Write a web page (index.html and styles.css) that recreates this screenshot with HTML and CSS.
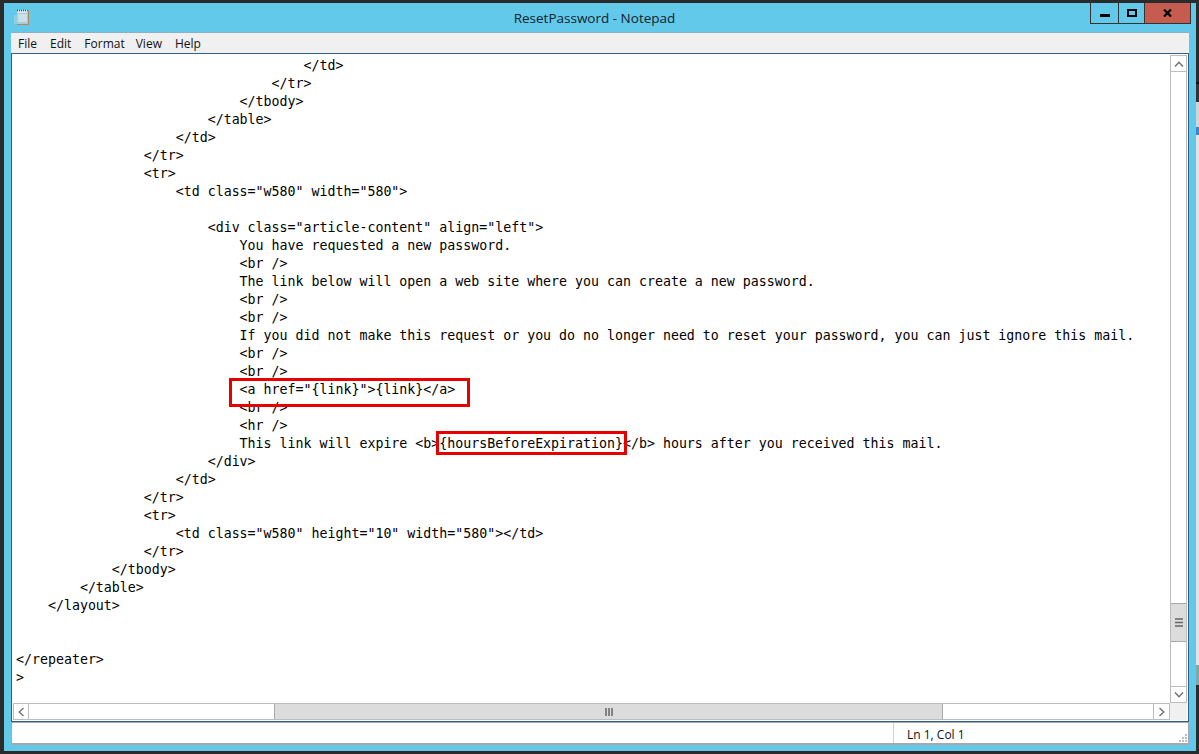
FILE: index.html
```html
<!DOCTYPE html>
<html lang="en">
<head>
<meta charset="utf-8">
<title>ResetPassword - Notepad</title>
<link rel="stylesheet" href="styles.css">
</head>
<body>
<div class="desktop">
  <div class="window">
    <div class="titlebar">
      <svg class="app-icon" width="16" height="16" viewBox="0 0 16 16">
        <rect x="3" y="1" width="12" height="15" fill="#b08a5e"/>
        <rect x="0" y="6" width="3" height="9" fill="#8fd0e0"/>
        <rect x="3" y="1" width="10.5" height="14" fill="#d6e8ee"/>
        <rect x="3" y="4" width="10.5" height="11" fill="#a9cdd8"/>
        <path d="M4 6h9M4 8h9M4 10h9M4 12h9" stroke="#e8f3f6" stroke-width="1"/>
        <path d="M3 1.500h10.500" stroke="#3c4a55" stroke-width="1.400" stroke-dasharray="1 1"/>
      </svg>
      <div class="title">ResetPassword - Notepad</div>
      <div class="controls">
        <div class="ctl ctl-min"><svg width="10" height="3" viewBox="0 0 10 3"><rect width="10" height="3" fill="#000"/></svg></div>
        <div class="ctl ctl-max"><svg width="10" height="8" viewBox="0 0 10 8"><path d="M1 1h8v6H1z" fill="none" stroke="#000" stroke-width="2"/></svg></div>
        <div class="ctl ctl-close"><svg width="9" height="8" viewBox="0 0 9 8"><path d="M1 .5 8 7.500M8 .5 1 7.500" fill="none" stroke="#000" stroke-width="2.200"/></svg></div>
      </div>
    </div>
    <div class="client">
      <div class="menu">
        <span class="menu-item">File</span>
        <span class="menu-item">Edit</span>
        <span class="menu-item menu-item-format">Format</span>
        <span class="menu-item">View</span>
        <span class="menu-item">Help</span>
      </div>
      <div class="editor">
        <div class="text-area">
<pre class="code">                                    &lt;/td&gt;
                                &lt;/tr&gt;
                            &lt;/tbody&gt;
                        &lt;/table&gt;
                    &lt;/td&gt;
                &lt;/tr&gt;
                &lt;tr&gt;
                    &lt;td class="w580" width="580"&gt;

                        &lt;div class="article-content" align="left"&gt;
                            You have requested a new password.
                            &lt;br /&gt;
                            The link below will open a web site where you can create a new password.
                            &lt;br /&gt;
                            &lt;br /&gt;
                            If you did not make this request or you do no longer need to reset your password, you can just ignore this mail.
                            &lt;br /&gt;
                            &lt;br /&gt;
                            &lt;a href="{link}"&gt;{link}&lt;/a&gt;
                            &lt;br /&gt;
                            &lt;hr /&gt;
                            This link will expire &lt;b&gt;{hoursBeforeExpiration}&lt;/b&gt; hours after you received this mail.
                        &lt;/div&gt;
                    &lt;/td&gt;
                &lt;/tr&gt;
                &lt;tr&gt;
                    &lt;td class="w580" height="10" width="580"&gt;&lt;/td&gt;
                &lt;/tr&gt;
            &lt;/tbody&gt;
        &lt;/table&gt;
    &lt;/layout&gt;


&lt;/repeater&gt;
&gt;</pre>
          <div class="mark mark-link"></div>
          <div class="mark mark-hours"></div>
        </div>
        <div class="vscroll">
          <div class="sb-btn sb-btn-up"><svg width="10" height="6" viewBox="0 0 10 6"><path d="M1 5.500 5 1.200 9 5.500" fill="none" stroke="#6e6e6e" stroke-width="1.300"/></svg></div>
          <div class="sb-fill"></div>
          <div class="vthumb"><svg width="8" height="9" viewBox="0 0 8 9"><path d="M0 1h8M0 4.500h8M0 8h8" stroke="#666" stroke-width="1.500"/></svg></div>
          <div class="vscroll-rest"></div>
          <div class="sb-btn sb-btn-down"><svg width="10" height="6" viewBox="0 0 10 6"><path d="M1 .5 5 4.800 9 .5" fill="none" stroke="#6e6e6e" stroke-width="1.300"/></svg></div>
        </div>
        <div class="hscroll">
          <div class="sb-btn sb-btn-left"><svg width="6" height="10" viewBox="0 0 6 10"><path d="M5.500 1 1.200 5 5.500 9" fill="none" stroke="#6e6e6e" stroke-width="1.300"/></svg></div>
          <div class="hscroll-lead"></div>
          <div class="hthumb"><svg width="8" height="8" viewBox="0 0 8 8"><path d="M1 0v8M4 0v8M7 0v8" stroke="#666" stroke-width="1.500"/></svg></div>
          <div class="sb-fill"></div>
          <div class="sb-btn sb-btn-right"><svg width="6" height="10" viewBox="0 0 6 10"><path d="M.5 1 4.800 5 .5 9" fill="none" stroke="#6e6e6e" stroke-width="1.300"/></svg></div>
        </div>
        <div class="corner"></div>
      </div>
      <div class="status">
        <div class="status-main"></div>
        <div class="status-pos">Ln 1, Col 1</div>
        <svg class="grip" width="10" height="10" viewBox="0 0 10 10"><path d="M7 1h2v2H7zM4 4h2v2H4zM7 4h2v2H7zM1 7h2v2H1zM4 7h2v2H4zM7 7h2v2H7z" fill="#bdbdbd"/></svg>
      </div>
    </div>
  </div>
  <div class="behind">
    <div class="behind-a"></div>
    <div class="behind-b"></div>
    <div class="behind-c"></div>
    <div class="behind-d"></div>
    <div class="behind-e"></div>
    <div class="behind-f"></div>
    <div class="behind-g"></div>
  </div>
</div>
</body>
</html>
```

FILE: styles.css
```css
html, body {
  margin: 0;
  padding: 0;
  height: 100%;
  overflow: hidden;
  background: #2b2b2b;
}

.desktop {
  display: flex;
  height: 754px;
  width: 1199px;
  padding-left: 4px;
  box-sizing: border-box;
}

.window {
  width: 1192px;
  height: 748px;
  margin-top: 3px;
  background: #63c9ea;
  display: flex;
  flex-direction: column;
  flex: none;
}

.titlebar {
  height: 29px;
  display: flex;
  align-items: flex-start;
  flex: none;
  padding-left: 10px;
}

.app-icon {
  margin-top: 6px;
  flex: none;
}

.title {
  flex: 1;
  padding-left: 69px;
  margin-top: 5px;
  text-align: center;
  font: 13.5px/20px "Open Sans", "Noto Sans", sans-serif;
  color: #10222c;
}

.controls {
  display: flex;
  height: 21px;
  border: solid #333;
  border-width: 0 1px 1px 1px;
  box-sizing: border-box;
  margin-right: 5px;
  flex: none;
}

.ctl {
  display: flex;
  align-items: center;
  justify-content: center;
  box-sizing: border-box;
}

.ctl-min {
  width: 28px;
  border-right: 1px solid #333;
  padding-top: 5px;
}

.ctl-max {
  width: 26px;
  border-right: 1px solid #333;
}

.ctl-close {
  width: 45px;
  background: #c65b50;
}

.client {
  margin: 0 7px;
  height: 713px;
  display: flex;
  flex-direction: column;
  flex: none;
}

.menu {
  height: 21px;
  box-sizing: border-box;
  flex: none;
  background: #f0f0f0;
  border-top: 1px solid #8fb0c4;
  display: flex;
  align-items: center;
  padding: 1px 0 0 7px;
  font: 12px/18px "Open Sans", "Noto Sans", sans-serif;
  color: #111;
}

.menu-item {
  margin-right: 13px;
}

.menu-item-format {
  margin-right: 11px;
}

.editor {
  height: 669px;
  box-sizing: border-box;
  flex: none;
  border: 1px solid #2c628b;
  background: #fff;
  padding: 1px 0 1px 1px;
  display: grid;
  grid-template-columns: 1157px 17px;
  grid-template-rows: 648px 17px;
}

.text-area {
  position: relative;
  overflow: hidden;
  padding: 2px 0 0 3px;
}

.code {
  margin: 0;
  font: 13.28px/18px "DejaVu Sans Mono", monospace;
  color: #000;
  white-space: pre;
}

.mark {
  position: absolute;
  border: 3px solid #e60000;
  box-sizing: border-box;
}

.mark-link {
  left: 216px;
  top: 323px;
  width: 241px;
  height: 29px;
}

.mark-hours {
  left: 423px;
  top: 376px;
  width: 191px;
  height: 24px;
}

.vscroll {
  display: flex;
  flex-direction: column;
  border: solid #bcbcbc;
  border-width: 0 1px 0 1px;
  box-sizing: border-box;
  height: 648px;
}

.hscroll {
  display: flex;
  height: 17px;
  box-sizing: border-box;
  border: solid #bcbcbc;
  border-width: 1px 0 1px 0;
}

.sb-btn {
  flex: none;
  display: flex;
  align-items: center;
  justify-content: center;
  box-sizing: border-box;
  border: 0 solid #bcbcbc;
}

.sb-btn-up {
  height: 17px;
  border-top-width: 1px;
  border-bottom-width: 1px;
}

.sb-btn-down {
  height: 17px;
  border-top-width: 1px;
  border-bottom-width: 1px;
}

.sb-btn-left {
  width: 16px;
  border-left-width: 1px;
  border-right-width: 1px;
}

.sb-btn-right {
  width: 17px;
  border-left-width: 1px;
  border-right-width: 1px;
}

.sb-fill {
  flex: 1;
}

.vthumb {
  height: 39px;
  flex: none;
  box-sizing: border-box;
  background: #dcdcdc;
  border: solid #a9a9a9;
  border-width: 1px 0;
  display: flex;
  align-items: center;
  justify-content: center;
}

.vscroll-rest {
  height: 44px;
  flex: none;
}

.hscroll-lead {
  width: 245px;
  flex: none;
}

.hthumb {
  width: 669px;
  flex: none;
  box-sizing: border-box;
  background: #dcdcdc;
  border: solid #a9a9a9;
  border-width: 0 1px;
  display: flex;
  align-items: center;
  justify-content: center;
}

.corner {
  background: #f0f0f0;
}

.status {
  height: 23px;
  box-sizing: border-box;
  flex: none;
  background: #fff;
  border: solid #a8a8a8;
  border-width: 1px 1px 2px 1px;
  display: flex;
  align-items: center;
  font: 12px/18px "Open Sans", "Noto Sans", sans-serif;
  color: #111;
  position: relative;
}

.status-main {
  width: 881px;
  height: 100%;
  border-right: 1px solid #d0d0d0;
  flex: none;
}

.status-pos {
  padding: 3px 0 0 13px;
}

.grip {
  position: absolute;
  right: 0;
  bottom: 0;
}

.behind {
  width: 3px;
  flex: none;
  display: flex;
  flex-direction: column;
}

.behind-a { height: 82px; background: #2b2b2b; }
.behind-b { height: 18px; background: #333; border-top: 2px solid #111; }
.behind-c { height: 25px; background: #cfd6da; }
.behind-d { height: 8px; background: #3f86c8; }
.behind-e { height: 530px; background: #e4e4e4; }
.behind-f { height: 20px; background: #7fa8a8; }
.behind-g { flex: 1; background: #2b2b2b; }
```
